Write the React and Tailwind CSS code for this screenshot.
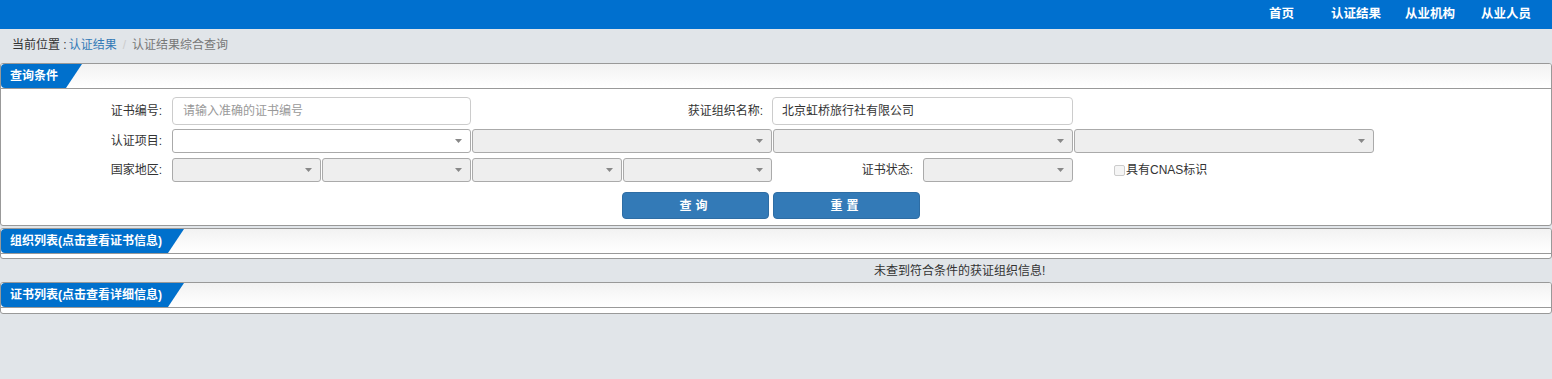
import React from "react";

const font = { fontFamily: '"Liberation Sans", "Noto Sans CJK SC", sans-serif' };

function Arrow() {
  return (
    <svg width="7" height="4" viewBox="0 0 7 4" className="absolute right-[8px] top-1/2 -translate-y-1/2">
      <path d="M0 0h7L3.5 4z" fill="#888" />
    </svg>
  );
}

function Select({ w, white }) {
  return (
    <div
      className={`relative h-[24px] ${w} rounded-[3px] border border-[#aaa] ${white ? "bg-white" : "bg-[#eee]"}`}
    >
      <Arrow />
    </div>
  );
}

function Panel({ title, tabW, children }) {
  return (
    <div className="rounded-[3px] border border-[#999] bg-white overflow-hidden">
      <div className="h-[25px] border-b border-[#999] bg-gradient-to-b from-[#f2f2f2] to-white">
        <div
          className={`h-[24px] ${tabW} rounded-l-[4px] bg-[#0070cc] pl-[9px] text-[12px] font-bold leading-[24px] text-white [clip-path:polygon(0_0,100%_0,calc(100%-16px)_100%,0_100%)]`}
        >
          {title}
        </div>
      </div>
      {children}
    </div>
  );
}

export default function App() {
  return (
    <div style={font} className="min-h-screen bg-[#e1e5e9] text-[12px] text-[#333]">
      {/* top bar */}
      <div className="flex h-[29px] items-center justify-end bg-[#0070cf] pr-[21px] text-[12.5px] font-bold text-white">
        <span>首页</span>
        <span className="ml-[37px]">认证结果</span>
        <span className="ml-[24px]">从业机构</span>
        <span className="ml-[26px]">从业人员</span>
      </div>

      {/* breadcrumb */}
      <div className="flex h-[31px] items-center pl-[12px]">
        <span className="text-[#333]">当前位置 : </span>
        <span className="ml-[2px] text-[#337ab7]">认证结果</span>
        <span className="px-[6px] text-[#ccc]">/</span>
        <span className="text-[#777]">认证结果综合查询</span>
      </div>

      <div className="mt-[3px]">
        <Panel title="查询条件" tabW="w-[81px]">
          <div className="flex flex-col pb-[6px] pt-[8px]">
            <div className="flex h-[28px] items-center">
              <div className="w-[171px] pr-[10px] text-right">证书编号:</div>
              <div className="flex h-[28px] w-[299px] items-center rounded-[4px] border border-[#ccc] pl-[10px] text-[#999]">
                请输入准确的证书编号
              </div>
              <div className="w-[301px] pr-[9px] text-right">获证组织名称:</div>
              <div className="flex h-[28px] w-[301px] items-center rounded-[4px] border border-[#ccc] pl-[9px] text-[#333]">
                北京虹桥旅行社有限公司
              </div>
            </div>

            <div className="mt-[4px] flex items-center">
              <div className="w-[171px] pr-[10px] text-right">认证项目:</div>
              <div className="flex gap-[1px]">
                <Select w="w-[299px]" white />
                <Select w="w-[300px]" />
                <Select w="w-[300px]" />
                <Select w="w-[300px]" />
              </div>
            </div>

            <div className="mt-[5px] flex items-center">
              <div className="w-[171px] pr-[10px] text-right">国家地区:</div>
              <div className="flex gap-[1px]">
                <Select w="w-[149px]" />
                <Select w="w-[149px]" />
                <Select w="w-[150px]" />
                <Select w="w-[149px]" />
              </div>
              <div className="w-[151px] pr-[10px] text-right">证书状态:</div>
              <Select w="w-[150px]" />
              <label className="ml-[41px] flex items-center">
                <span className="h-[11px] w-[11px] rounded-[2px] border border-[#ccc] bg-[#f5f5f5]" />
                <span className="ml-[1px]">具有CNAS标识</span>
              </label>
            </div>

            <div className="mt-[10px] flex gap-[4px] pl-[621px]">
              <button className="h-[27px] w-[147px] rounded-[4px] border border-[#2e6da4] bg-[#337ab7] text-[12px] font-bold tracking-[4px] text-white">
                查询
              </button>
              <button className="h-[27px] w-[147px] rounded-[4px] border border-[#2e6da4] bg-[#337ab7] text-[12px] font-bold tracking-[4px] text-white">
                重置
              </button>
            </div>
          </div>
        </Panel>
      </div>

      <div className="mt-[2px]">
        <Panel title="组织列表(点击查看证书信息)" tabW="w-[183px]">
          <div className="h-[4px]" />
        </Panel>
      </div>

      <div className="flex h-[23px] items-center pl-[874px] text-[#333]">未查到符合条件的获证组织信息!</div>

      <Panel title="证书列表(点击查看详细信息)" tabW="w-[183px]">
        <div className="h-[5px]" />
      </Panel>
    </div>
  );
}
